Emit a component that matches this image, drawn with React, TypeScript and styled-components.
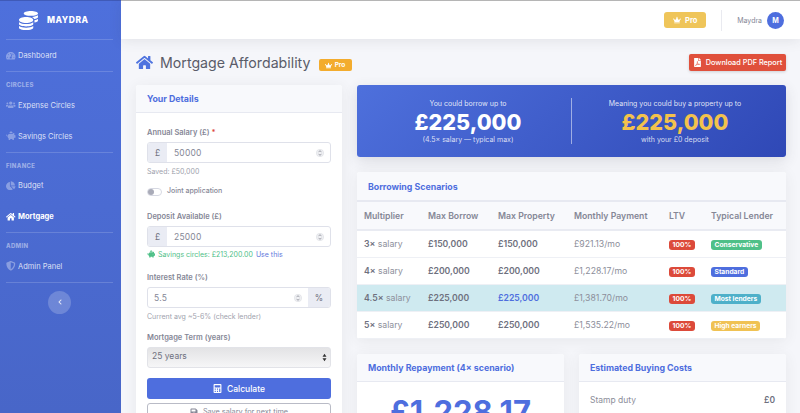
import styled, { createGlobalStyle } from "styled-components";
import {
  FaCalculator,
  FaChartPie,
  FaChevronLeft,
  FaCoins,
  FaCrown,
  FaFilePdf,
  FaHome,
  FaPiggyBank,
  FaSave,
  FaShieldAlt,
  FaTachometerAlt,
  FaUsers,
} from "react-icons/fa";
import type { ReactNode } from "react";

const scenarios = [
  { mult: "3×", borrow: "£150,000", property: "£150,000", payment: "£921.13/mo", lender: "Conservative", tone: "#4fc088" },
  { mult: "4×", borrow: "£200,000", property: "£200,000", payment: "£1,228.17/mo", lender: "Standard", tone: "#4e6ede" },
  { mult: "4.5×", borrow: "£225,000", property: "£225,000", payment: "£1,381.70/mo", lender: "Most lenders", tone: "#4eb0c9", active: true },
  { mult: "5×", borrow: "£250,000", property: "£250,000", payment: "£1,535.22/mo", lender: "High earners", tone: "#f0c253" },
];

function Spinner() {
  return (
    <SpinnerIcon viewBox="0 0 10 12" aria-hidden="true">
      <circle cx="5" cy="6" r="4.6" fill="#f1f2f5" stroke="#d5d7de" strokeWidth="0.6" />
      <path d="M3.2 5 5 3l1.8 2M3.2 7 5 9l1.8-2" fill="none" stroke="#7d7f8a" strokeWidth="0.9" />
    </SpinnerIcon>
  );
}

function NumberField({ value, prefix, suffix }: { value: string; prefix?: string; suffix?: string }) {
  return (
    <InputGroup>
      {prefix && <Addon $side="left">{prefix}</Addon>}
      <InputWrap>
        <FieldInput readOnly value={value} $indent={!prefix} />
        <Spinner />
      </InputWrap>
      {suffix && <Addon $side="right">{suffix}</Addon>}
    </InputGroup>
  );
}

function NavItem({ icon, label, active }: { icon: ReactNode; label: string; active?: boolean }) {
  return (
    <NavLink $active={active}>
      <NavIcon $active={active}>{icon}</NavIcon>
      {label}
    </NavLink>
  );
}

export default function App() {
  return (
    <>
      <GlobalStyle />
      <Shell>
        <Sidebar>
          <Brand>
            <FaCoins size={19} />
            <BrandName>MAYDRA</BrandName>
          </Brand>
          <SideDivider />
          <NavItem icon={<FaTachometerAlt />} label="Dashboard" />
          <SideDivider />
          <SideHeading>CIRCLES</SideHeading>
          <NavItem icon={<FaUsers />} label="Expense Circles" />
          <NavItem icon={<FaPiggyBank />} label="Savings Circles" />
          <SideDivider />
          <SideHeading>FINANCE</SideHeading>
          <NavItem icon={<FaChartPie />} label="Budget" />
          <NavItem icon={<FaHome />} label="Mortgage" active />
          <SideDivider />
          <SideHeading>ADMIN</SideHeading>
          <NavItem icon={<FaShieldAlt />} label="Admin Panel" />
          <SideDivider />
          <CollapseButton>
            <FaChevronLeft size={6} />
          </CollapseButton>
        </Sidebar>

        <Main>
          <Topbar>
            <ProButton>
              <FaCrown size={8} /> Pro
            </ProButton>
            <TopDivider />
            <UserName>Maydra</UserName>
            <Avatar>M</Avatar>
          </Topbar>

          <Content>
            <PageHeader>
              <TitleGroup>
                <FaHome size={17} color="#4e73df" />
                <PageTitle>Mortgage Affordability</PageTitle>
                <ProTag>
                  <FaCrown size={7} /> Pro
                </ProTag>
              </TitleGroup>
              <PdfButton>
                <FaFilePdf size={9} /> Download PDF Report
              </PdfButton>
            </PageHeader>

            <Columns>
              <LeftCard>
                <CardHeader>
                  <CardTitle>Your Details</CardTitle>
                </CardHeader>
                <FormBody>
                  <FieldLabel>
                    Annual Salary (£) <Required>*</Required>
                  </FieldLabel>
                  <NumberField prefix="£" value="50000" />
                  <HelpText>Saved: £50,000</HelpText>
                  <ToggleRow>
                    <Toggle />
                    <ToggleLabel>Joint application</ToggleLabel>
                  </ToggleRow>
                  <FieldLabel>Deposit Available (£)</FieldLabel>
                  <NumberField prefix="£" value="25000" />
                  <SavingsNote>
                    <FaPiggyBank size={8} /> Savings circles: £213,200.00 <UseLink>Use this</UseLink>
                  </SavingsNote>
                  <FieldLabel>Interest Rate (%)</FieldLabel>
                  <NumberField suffix="%" value="5.5" />
                  <RateHelp>Current avg ~5-6% (check lender)</RateHelp>
                  <FieldLabel>Mortgage Term (years)</FieldLabel>
                  <SelectBox>
                    <TermSelect defaultValue="25">
                      <option value="25">25 years</option>
                    </TermSelect>
                    <SelectArrows viewBox="0 0 6 10" aria-hidden="true">
                      <path d="M3 0.5 5.4 4H0.6zM3 9.5 0.6 6h4.8z" fill="#333" />
                    </SelectArrows>
                  </SelectBox>
                  <PrimaryButton>
                    <FaCalculator size={9} /> Calculate
                  </PrimaryButton>
                  <OutlineButton>
                    <FaSave size={8} /> Save salary for next time
                  </OutlineButton>
                </FormBody>
              </LeftCard>

              <RightColumn>
                <Hero>
                  <HeroCell>
                    <HeroCaption>You could borrow up to</HeroCaption>
                    <HeroAmount>£225,000</HeroAmount>
                    <HeroNote>(4.5× salary — typical max)</HeroNote>
                  </HeroCell>
                  <HeroDivider />
                  <HeroCell>
                    <HeroCaption>Meaning you could buy a property up to</HeroCaption>
                    <HeroAmount $gold>£225,000</HeroAmount>
                    <HeroNote>with your £0 deposit</HeroNote>
                  </HeroCell>
                </Hero>

                <Card>
                  <TableHeader>
                    <CardTitle>Borrowing Scenarios</CardTitle>
                  </TableHeader>
                  <Table>
                    <colgroup>
                      <col style={{ width: 64 }} />
                      <col style={{ width: 70 }} />
                      <col style={{ width: 76 }} />
                      <col style={{ width: 95 }} />
                      <col style={{ width: 42 }} />
                      <col />
                    </colgroup>
                    <thead>
                      <tr>
                        <HeadCell>Multiplier</HeadCell>
                        <HeadCell>Max Borrow</HeadCell>
                        <HeadCell>Max Property</HeadCell>
                        <HeadCell>Monthly Payment</HeadCell>
                        <HeadCell>LTV</HeadCell>
                        <HeadCell>Typical Lender</HeadCell>
                      </tr>
                    </thead>
                    <tbody>
                      {scenarios.map((row) => (
                        <Row key={row.mult} $active={row.active}>
                          <Cell>
                            <Strong>{row.mult}</Strong> salary
                          </Cell>
                          <Cell>
                            <Strong>{row.borrow}</Strong>
                          </Cell>
                          <Cell>
                            <Strong $blue={row.active}>{row.property}</Strong>
                          </Cell>
                          <Cell>{row.payment}</Cell>
                          <Cell>
                            <Pill $tone="#dc4a3a">100%</Pill>
                          </Cell>
                          <Cell>
                            <Pill $tone={row.tone}>{row.lender}</Pill>
                          </Cell>
                        </Row>
                      ))}
                    </tbody>
                  </Table>
                </Card>

                <BottomGrid>
                  <Card>
                    <CardHeader>
                      <CardTitle>Monthly Repayment (4× scenario)</CardTitle>
                    </CardHeader>
                    <BigAmount>£1,228.17</BigAmount>
                  </Card>
                  <Card>
                    <CardHeader>
                      <CardTitle>Estimated Buying Costs</CardTitle>
                    </CardHeader>
                    <CostRow>
                      <span>Stamp duty</span>
                      <CostValue>£0</CostValue>
                    </CostRow>
                  </Card>
                </BottomGrid>
              </RightColumn>
            </Columns>
          </Content>
        </Main>
      </Shell>
    </>
  );
}

const GlobalStyle = createGlobalStyle`
  html, body {
    margin: 0;
    height: 100%;
    overflow: hidden;
  }
  * {
    box-sizing: border-box;
  }
  body {
    font-family: Inter, "Liberation Sans", sans-serif;
    color: #858796;
  }
`;

const Shell = styled.div`
  display: flex;
  width: 800px;
  height: 413px;
  overflow: hidden;
  background: #f5f6fa;
`;

const Sidebar = styled.nav`
  flex: 0 0 121px;
  display: flex;
  flex-direction: column;
  padding: 0 8px 0 6px;
  background: linear-gradient(180deg, #4e70dc 0%, #4866c8 100%);
  border-top: 1px solid #3f5ab8;
  color: #fff;
`;

const Brand = styled.div`
  height: 38px;
  display: flex;
  align-items: center;
  gap: 9px;
  padding-left: 13px;
`;

const BrandName = styled.span`
  font-size: 8.5px;
  font-weight: 800;
  letter-spacing: 0.5px;
`;

const SideDivider = styled.div`
  flex: none;
  height: 1px;
  background: rgba(255, 255, 255, 0.16);
`;

const SideHeading = styled.div`
  flex: none;
  height: 17.5px;
  padding-top: 9px;
  font-size: 6px;
  line-height: 7px;
  font-weight: 800;
  letter-spacing: 0.3px;
  color: rgba(255, 255, 255, 0.45);
`;

const NavLink = styled.a<{ $active?: boolean }>`
  height: 31px;
  flex: none;
  display: flex;
  align-items: center;
  gap: 2px;
  font-size: 7.5px;
  font-weight: ${({ $active }) => ($active ? 700 : 400)};
  color: ${({ $active }) => ($active ? "#fff" : "rgba(255, 255, 255, 0.8)")};
`;

const NavIcon = styled.span<{ $active?: boolean }>`
  width: 10px;
  display: flex;
  justify-content: center;
  font-size: 9.5px;
  color: ${({ $active }) => ($active ? "#fff" : "rgba(255, 255, 255, 0.35)")};
`;

const CollapseButton = styled.button`
  width: 23px;
  height: 23px;
  margin: 8px 0 0 42px;
  padding: 0;
  display: flex;
  align-items: center;
  justify-content: center;
  border: 0;
  border-radius: 50%;
  background: rgba(255, 255, 255, 0.2);
  color: rgba(255, 255, 255, 0.8);
`;

const Main = styled.main`
  flex: 1;
  min-width: 0;
  display: flex;
  flex-direction: column;
`;

const Topbar = styled.header`
  flex: 0 0 39px;
  display: flex;
  align-items: center;
  justify-content: flex-end;
  padding-right: 16px;
  background: #fff;
  border-top: 1px solid #b5b5b5;
  box-shadow: 0 2px 12px rgba(58, 59, 69, 0.1);
  z-index: 1;
`;

const ProButton = styled.div`
  width: 42px;
  height: 16px;
  display: flex;
  align-items: center;
  justify-content: center;
  gap: 4px;
  border-radius: 3px;
  background: #efc55a;
  color: #fff;
  font-size: 7.5px;
  font-weight: 700;
`;

const TopDivider = styled.div`
  width: 1px;
  height: 21px;
  margin: 0 15px;
  background: #e9eaf0;
`;

const UserName = styled.span`
  font-size: 7px;
  color: #858796;
`;

const Avatar = styled.div`
  width: 17px;
  height: 17px;
  margin-left: 5px;
  display: flex;
  align-items: center;
  justify-content: center;
  border-radius: 50%;
  background: #4e6ede;
  color: #fff;
  font-size: 7px;
  font-weight: 700;
`;

const Content = styled.div`
  flex: 1;
  min-height: 0;
  padding: 11px 14px 0 15px;
`;

const PageHeader = styled.div`
  height: 24px;
  margin-bottom: 11px;
  display: flex;
  align-items: center;
  justify-content: space-between;
`;

const TitleGroup = styled.div`
  display: flex;
  align-items: center;
`;

const PageTitle = styled.h1`
  margin: 0 8px 0 7px;
  font-size: 14.2px;
  font-weight: 400;
  color: #5a5c69;
`;

const ProTag = styled.span`
  width: 33px;
  height: 12px;
  margin-top: 6px;
  display: flex;
  align-items: center;
  justify-content: center;
  gap: 3px;
  border-radius: 2px;
  background: #f3ac2e;
  color: #fff;
  font-size: 6.5px;
  font-weight: 700;
`;

const PdfButton = styled.div`
  width: 97px;
  height: 17px;
  display: flex;
  align-items: center;
  justify-content: center;
  gap: 4px;
  border-radius: 2px;
  background: #e0503c;
  box-shadow: 0 1px 3px rgba(58, 59, 69, 0.2);
  color: #fff;
  font-size: 7.3px;
  font-weight: 500;
`;

const Columns = styled.div`
  display: grid;
  grid-template-columns: 206px 429px;
  gap: 15px;
  align-items: start;
`;

const Card = styled.section`
  background: #fff;
  border-radius: 3px;
  box-shadow: 0 2px 14px rgba(58, 59, 69, 0.08);
  overflow: hidden;
`;

const LeftCard = styled(Card)`
  height: 420px;
`;

const CardHeader = styled.div`
  height: 28px;
  display: flex;
  align-items: center;
  padding: 0 11px;
  background: #f8f9fc;
  border-bottom: 1px solid #e7e9f1;
`;

const TableHeader = styled(CardHeader)`
  height: 30px;
  border-bottom-width: 2px;
`;

const CardTitle = styled.h2`
  margin: 0;
  font-size: 8.8px;
  font-weight: 700;
  color: #4e6ede;
`;

const FormBody = styled.div`
  padding: 14px 11px 0;
`;

const FieldLabel = styled.label`
  display: block;
  height: 15px;
  font-size: 7.5px;
  font-weight: 600;
  line-height: 11px;
  color: #858796;
`;

const Required = styled.span`
  color: #dc4a3a;
`;

const InputGroup = styled.div`
  display: flex;
  height: 21px;
  border: 1px solid #dfe1ea;
  border-radius: 3px;
  overflow: hidden;
  background: #fff;
`;

const Addon = styled.span<{ $side: "left" | "right" }>`
  flex: 0 0 ${({ $side }) => ($side === "left" ? "19px" : "22px")};
  display: flex;
  align-items: center;
  justify-content: center;
  background: #eaecf4;
  font-size: 8.5px;
  color: #6e707e;
`;

const InputWrap = styled.div`
  flex: 1;
  min-width: 0;
  display: flex;
  align-items: center;
  padding-right: 6px;
`;

const FieldInput = styled.input<{ $indent?: boolean }>`
  flex: 1;
  min-width: 0;
  height: 100%;
  padding: 0 0 0 ${({ $indent }) => ($indent ? "6px" : "7px")};
  border: 0;
  outline: 0;
  background: transparent;
  font: 400 8.5px Inter, "Liberation Sans", sans-serif;
  letter-spacing: 0.2px;
  color: #858796;
`;

const SpinnerIcon = styled.svg`
  width: 8px;
  height: 10px;
  flex: none;
`;

const HelpText = styled.div`
  height: 23px;
  padding-top: 4px;
  font-size: 7px;
  line-height: 9px;
  color: #a0a2ad;
`;

const RateHelp = styled(HelpText)`
  height: 24px;
`;

const ToggleRow = styled.div`
  height: 25px;
  display: flex;
  align-items: flex-start;
  gap: 5px;
`;

const Toggle = styled.span`
  position: relative;
  width: 15px;
  height: 8px;
  margin-top: 2px;
  border: 1px solid #d6d8e2;
  border-radius: 5px;
  background: #fff;

  &::before {
    content: "";
    position: absolute;
    top: 0;
    left: 0;
    width: 6px;
    height: 6px;
    border-radius: 50%;
    background: #a9abb8;
  }
`;

const ToggleLabel = styled.span`
  font-size: 7px;
  font-weight: 500;
  line-height: 10px;
  color: #858796;
`;

const SavingsNote = styled.div`
  height: 25px;
  display: flex;
  align-items: flex-start;
  gap: 3px;
  padding-top: 3px;
  font-size: 7px;
  line-height: 9px;
  color: #4fc088;
`;

const UseLink = styled.a`
  color: #5f78dc;
`;

const SelectBox = styled.div`
  position: relative;
  height: 21px;
  margin-bottom: 10px;
  border: 1px solid #e2e3e8;
  border-radius: 3px;
  background: linear-gradient(180deg, #e3e3e5 0%, #f6f6f7 100%);
`;

const TermSelect = styled.select`
  display: block;
  width: 100%;
  height: 16px;
  padding: 0 4px;
  appearance: none;
  border: 0;
  background: transparent;
  font: 400 8.5px Inter, "Liberation Sans", sans-serif;
  color: #6e707e;
`;

const SelectArrows = styled.svg`
  position: absolute;
  top: 5px;
  right: 3px;
  width: 5px;
  height: 9px;
`;

const PrimaryButton = styled.button`
  width: 100%;
  height: 21px;
  display: flex;
  align-items: center;
  justify-content: center;
  gap: 5px;
  border: 0;
  border-radius: 3px;
  background: #4e6ede;
  color: #fff;
  font: 500 8.5px Inter, "Liberation Sans", sans-serif;
`;

const OutlineButton = styled.button`
  width: 100%;
  height: 17px;
  margin-top: 4px;
  display: flex;
  align-items: center;
  justify-content: center;
  gap: 5px;
  border: 1px solid #b9bbc6;
  border-radius: 3px;
  background: #fff;
  color: #858796;
  font: 400 7.3px Inter, "Liberation Sans", sans-serif;
`;

const RightColumn = styled.div`
  display: flex;
  flex-direction: column;
  gap: 15px;
`;

const Hero = styled.section`
  height: 72px;
  padding: 0 8px;
  display: flex;
  align-items: center;
  border-radius: 3px;
  background: linear-gradient(135deg, #4e70dc 0%, #2f48b6 100%);
  box-shadow: 0 4px 14px rgba(58, 59, 69, 0.14);
  color: #fff;
`;

const HeroCell = styled.div`
  flex: 1;
  text-align: center;
`;

const HeroDivider = styled.div`
  flex: none;
  width: 1px;
  height: 46px;
  background: rgba(255, 255, 255, 0.5);
`;

const HeroCaption = styled.div`
  font-size: 7px;
  line-height: 9px;
  color: rgba(255, 255, 255, 0.85);
`;

const HeroAmount = styled.div<{ $gold?: boolean }>`
  margin-top: 2px;
  font-size: 21.6px;
  font-weight: 800;
  line-height: 25px;
  color: ${({ $gold }) => ($gold ? "#f3c24c" : "#fff")};
`;

const HeroNote = styled.div`
  font-size: 7px;
  line-height: 9px;
  color: rgba(255, 255, 255, 0.8);
`;

const Table = styled.table`
  width: 100%;
  table-layout: fixed;
  border-collapse: collapse;
`;

const HeadCell = styled.th`
  height: 28px;
  padding: 0 0 0 7px;
  background: #f8f9fc;
  border-bottom: 2px solid #e9ebf2;
  text-align: left;
  font-size: 8.7px;
  font-weight: 600;
  color: #858796;
`;

const Row = styled.tr<{ $active?: boolean }>`
  background: ${({ $active }) => ($active ? "#cfeaf0" : "#fff")};
`;

const Cell = styled.td`
  height: 27px;
  padding: 1px 0 0 7px;
  border-bottom: 1px solid #eef0f5;
  font-size: 8.7px;
  color: #8c8e9a;
  white-space: nowrap;
`;

const Strong = styled.strong<{ $blue?: boolean }>`
  font-weight: 600;
  color: ${({ $blue }) => ($blue ? "#4e6ede" : "#6e707e")};
`;

const Pill = styled.span<{ $tone: string }>`
  display: inline-block;
  padding: 1px 3.5px;
  border-radius: 3px;
  background: ${({ $tone }) => $tone};
  color: #fff;
  font-size: 6.7px;
  font-weight: 700;
  line-height: 8px;
`;

const BottomGrid = styled.div`
  display: grid;
  grid-template-columns: 207px 207px;
  gap: 15px;
`;

const BigAmount = styled.div`
  padding-top: 11px;
  text-align: center;
  font-size: 31px;
  font-weight: 700;
  color: #4e6ede;
`;

const CostRow = styled.div`
  display: flex;
  justify-content: space-between;
  padding: 13px 11px;
  font-size: 8.5px;
  color: #8c8e9a;
`;

const CostValue = styled.span`
  font-weight: 600;
  color: #6e707e;
`;
